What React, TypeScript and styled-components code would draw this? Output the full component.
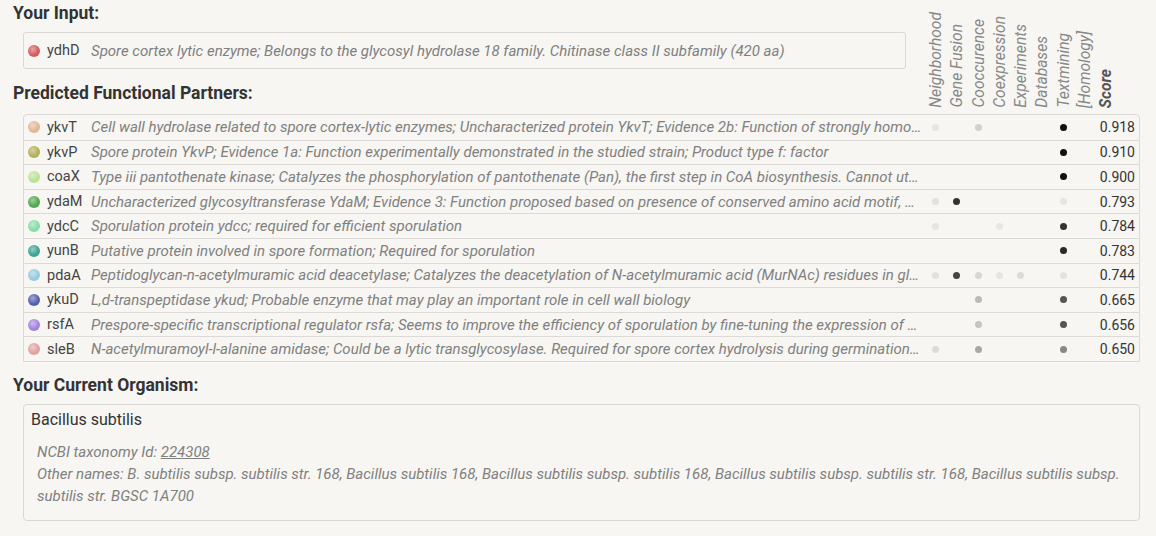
import React from "react";
import styled, { createGlobalStyle } from "styled-components";

const Global = createGlobalStyle`
  html, body { margin: 0; padding: 0; background: #f7f6f2; }
  body { font-family: Roboto, "Liberation Sans", sans-serif; color: #333; }
`;

const Page = styled.div`
  padding: 2px 16px 0 13px;
  width: 1156px;
  box-sizing: border-box;
`;

const Top = styled.div`
  display: grid;
  grid-template-columns: 1fr 215px;
  height: 112px;
`;

const LeftCol = styled.div`
  display: flex;
  flex-direction: column;
`;

const Heading = styled.h2`
  margin: 0;
  font-size: 17.5px;
  font-weight: 700;
  line-height: 22px;
  color: #333;
`;

const InputBox = styled.div`
  margin: 8px 19px 13px 10px;
  height: 37px;
  box-sizing: border-box;
  border: 1px solid #d9d8d5;
  border-radius: 3px;
  display: flex;
  align-items: center;
  padding-left: 4px;
`;

const Labels = styled.div`
  display: flex;
  align-items: flex-end;
  padding-bottom: 6px;
`;

const Label = styled.div<{ $bold?: boolean }>`
  width: 21.25px;
  flex: 0 0 21.25px;
  writing-mode: vertical-rl;
  transform: rotate(180deg);
  display: flex;
  align-items: center;
  font-size: 15.6px;
  line-height: 18px;
  font-style: italic;
  font-weight: ${(p) => (p.$bold ? 700 : 400)};
  color: ${(p) => (p.$bold ? "#555" : "#888")};
  white-space: nowrap;
`;

const Table = styled.div`
  margin: 0 0 0 10px;
  border: 1px solid #dbdad6;
  border-radius: 4px 4px 0 0;
`;

const Row = styled.div`
  display: flex;
  align-items: center;
  height: 24.6px;
  box-sizing: border-box;
  padding-left: 4px;
  & + & { border-top: 1px solid #dbdad6; }
`;

const Ball = styled.span<{ $c: string }>`
  flex: 0 0 12px;
  width: 12px;
  height: 12px;
  border-radius: 50%;
  background: radial-gradient(circle at 40% 35%, rgba(255,255,255,0.45) 0%, ${(p) => p.$c} 55%, ${(p) => p.$c} 75%, rgba(0,0,0,0.25) 100%), ${(p) => p.$c};
  margin-right: 7px;
`;

const Name = styled.span`
  flex: 0 0 44px;
  font-size: 14.5px;
  color: #444;
  white-space: nowrap;
`;

const Desc = styled.span`
  flex: 1 1 auto;
  min-width: 0;
  font-size: 15px;
  font-style: italic;
  color: #808080;
  white-space: nowrap;
  overflow: hidden;
  text-overflow: ellipsis;
  padding-right: 3px;
`;

const Dots = styled.div`
  display: flex;
  flex: 0 0 170px;
`;

const DotCell = styled.div`
  width: 21.25px;
  flex: 0 0 21.25px;
  display: flex;
  justify-content: center;
  align-items: center;
`;

const Dot = styled.span<{ $c: string }>`
  width: 7px;
  height: 7px;
  border-radius: 50%;
  background: ${(p) => p.$c};
`;

const Score = styled.span`
  flex: 0 0 44px;
  text-align: right;
  padding-right: 4px;
  box-sizing: border-box;
  font-size: 14px;
  color: #333;
`;

const OrgHeading = styled(Heading)`
  margin-top: 12px;
`;

const OrgBox = styled.div`
  margin: 8px 0 0 10px;
  border: 1px solid #d9d8d5;
  border-radius: 4px;
  padding: 4px 8px 13px 7px;
`;

const OrgName = styled.div`
  font-size: 16px;
  line-height: 22px;
  color: #333;
  margin-bottom: 10px;
`;

const OrgInfo = styled.div`
  padding-left: 6px;
  font-size: 15px;
  line-height: 22px;
  font-style: italic;
  color: #808080;
`;

const TaxLink = styled.span`
  text-decoration: underline;
`;

type P = { name: string; color: string; desc: string; dots: (string | null)[]; score: string };

const L = "#e6e5e2";
const partners: P[] = [
  { name: "ykvT", color: "#e2b896", desc: "Cell wall hydrolase related to spore cortex-lytic enzymes; Uncharacterized protein YkvT; Evidence 2b: Function of strongly homologous gene; Product type e: enzyme", dots: [L, null, "#d2d1ce", null, null, null, "#111", null], score: "0.918" },
  { name: "ykvP", color: "#b4ae5a", desc: "Spore protein YkvP; Evidence 1a: Function experimentally demonstrated in the studied strain; Product type f: factor", dots: [null, null, null, null, null, null, "#111", null], score: "0.910" },
  { name: "coaX", color: "#bce296", desc: "Type iii pantothenate kinase; Catalyzes the phosphorylation of pantothenate (Pan), the first step in CoA biosynthesis. Cannot utilize pantetheine", dots: [null, null, null, null, null, null, "#111", null], score: "0.900" },
  { name: "ydaM", color: "#52a852", desc: "Uncharacterized glycosyltransferase YdaM; Evidence 3: Function proposed based on presence of conserved amino acid motif, structural feature", dots: ["#e2e1de", "#333", null, null, null, null, L, null], score: "0.793" },
  { name: "ydcC", color: "#86dcaa", desc: "Sporulation protein ydcc; required for efficient sporulation", dots: [L, null, null, "#e8e7e4", null, null, "#333", null], score: "0.784" },
  { name: "yunB", color: "#3fa393", desc: "Putative protein involved in spore formation; Required for sporulation", dots: [null, null, null, null, null, null, "#2a2a2a", null], score: "0.783" },
  { name: "pdaA", color: "#96cbe2", desc: "Peptidoglycan-n-acetylmuramic acid deacetylase; Catalyzes the deacetylation of N-acetylmuramic acid (MurNAc) residues in glycan strands", dots: ["#e2e1de", "#444", "#d8d7d4", "#e6e5e2", "#dcdbd8", null, "#e4e3e0", null], score: "0.744" },
  { name: "ykuD", color: "#5460ae", desc: "L,d-transpeptidase ykud; Probable enzyme that may play an important role in cell wall biology", dots: [null, null, "#bcbbb8", null, null, null, "#555", null], score: "0.665" },
  { name: "rsfA", color: "#a284e0", desc: "Prespore-specific transcriptional regulator rsfa; Seems to improve the efficiency of sporulation by fine-tuning the expression of genes", dots: [null, null, "#c6c5c2", null, null, null, "#555", null], score: "0.656" },
  { name: "sleB", color: "#e0a2a2", desc: "N-acetylmuramoyl-l-alanine amidase; Could be a lytic transglycosylase. Required for spore cortex hydrolysis during germination. In", dots: ["#dcdbd8", null, "#a9a8a5", null, null, null, "#888", null], score: "0.650" },
];

const labels = ["Neighborhood", "Gene Fusion", "Cooccurence", "Coexpression", "Experiments", "Databases", "Textmining", "[Homology]"];

export default function App() {
  return (
    <Page>
      <Global />
      <Top>
        <LeftCol>
          <Heading>Your Input:</Heading>
          <InputBox>
            <Ball $c="#d45c5c" />
            <Name>ydhD</Name>
            <Desc>Spore cortex lytic enzyme; Belongs to the glycosyl hydrolase 18 family. Chitinase class II subfamily (420 aa)</Desc>
          </InputBox>
          <Heading>Predicted Functional Partners:</Heading>
        </LeftCol>
        <Labels>
          {labels.map((l) => (
            <Label key={l}>{l}</Label>
          ))}
          <Label $bold>Score</Label>
        </Labels>
      </Top>
      <Table>
        {partners.map((p) => (
          <Row key={p.name}>
            <Ball $c={p.color} />
            <Name>{p.name}</Name>
            <Desc>{p.desc}</Desc>
            <Dots>
              {p.dots.map((d, i) => (
                <DotCell key={i}>{d && <Dot $c={d} />}</DotCell>
              ))}
            </Dots>
            <Score>{p.score}</Score>
          </Row>
        ))}
      </Table>
      <OrgHeading>Your Current Organism:</OrgHeading>
      <OrgBox>
        <OrgName>Bacillus subtilis</OrgName>
        <OrgInfo>
          NCBI taxonomy Id: <TaxLink>224308</TaxLink>
          <br />
          Other names: B. subtilis subsp. subtilis str. 168, Bacillus subtilis 168, Bacillus subtilis subsp. subtilis 168, Bacillus subtilis subsp. subtilis str. 168, Bacillus subtilis subsp. subtilis str. BGSC 1A700
        </OrgInfo>
      </OrgBox>
    </Page>
  );
}
